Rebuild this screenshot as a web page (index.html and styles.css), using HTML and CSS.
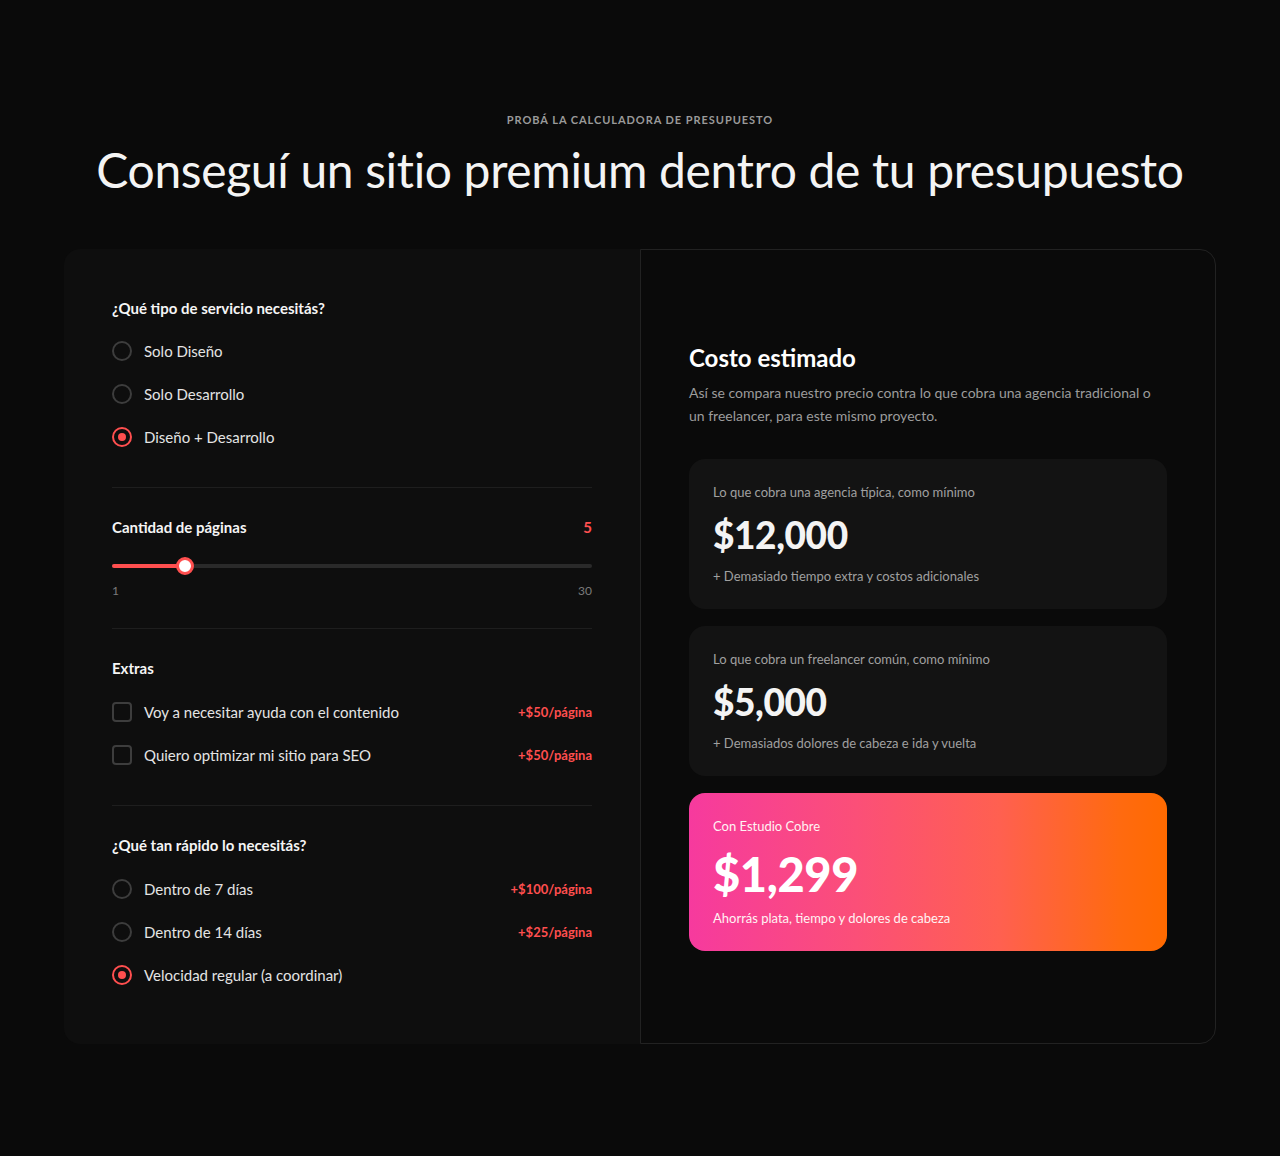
FILE: index.html
```html
<!DOCTYPE html>
<html lang="es">
<head>
<meta charset="utf-8">
<title>Calculadora de presupuesto</title>
<link rel="stylesheet" href="styles.css">
</head>
<body>
<main class="page">
  <header class="intro">
    <p class="eyebrow">PROBÁ LA CALCULADORA DE PRESUPUESTO</p>
    <h1 class="title">Conseguí un sitio premium dentro de tu presupuesto</h1>
  </header>

  <div class="calc">
    <div class="form">
      <section class="block block-first">
        <h3 class="block-title">¿Qué tipo de servicio necesitás?</h3>
        <div class="options">
          <div class="opt"><span class="radio"></span><span class="opt-label">Solo Diseño</span></div>
          <div class="opt"><span class="radio"></span><span class="opt-label">Solo Desarrollo</span></div>
          <div class="opt"><span class="radio on"></span><span class="opt-label">Diseño + Desarrollo</span></div>
        </div>
      </section>

      <section class="block block-slider">
        <div class="block-head">
          <h3 class="block-title">Cantidad de páginas</h3>
          <span class="count">5</span>
        </div>
        <div class="slider">
          <div class="track"><div class="fill" style="width:73px"></div></div>
          <span class="thumb" style="left:64px"></span>
        </div>
        <div class="range-labels"><span>1</span><span>30</span></div>
      </section>

      <section class="block">
        <h3 class="block-title">Extras</h3>
        <div class="options">
          <div class="opt"><span class="check"></span><span class="opt-label">Voy a necesitar ayuda con el contenido</span><span class="price">+$50/página</span></div>
          <div class="opt"><span class="check"></span><span class="opt-label">Quiero optimizar mi sitio para SEO</span><span class="price">+$50/página</span></div>
        </div>
      </section>

      <section class="block block-last">
        <h3 class="block-title">¿Qué tan rápido lo necesitás?</h3>
        <div class="options">
          <div class="opt"><span class="radio"></span><span class="opt-label">Dentro de 7 días</span><span class="price">+$100/página</span></div>
          <div class="opt"><span class="radio"></span><span class="opt-label">Dentro de 14 días</span><span class="price">+$25/página</span></div>
          <div class="opt"><span class="radio on"></span><span class="opt-label">Velocidad regular (a coordinar)</span></div>
        </div>
      </section>
    </div>

    <div class="result">
      <h2 class="result-title">Costo estimado</h2>
      <p class="result-sub">Así se compara nuestro precio contra lo que cobra una agencia tradicional o un freelancer, para este mismo proyecto.</p>
      <div class="cards">
        <div class="card">
          <p class="card-label">Lo que cobra una agencia típica, como mínimo</p>
          <p class="card-price">$12,000</p>
          <p class="card-note">+ Demasiado tiempo extra y costos adicionales</p>
        </div>
        <div class="card">
          <p class="card-label">Lo que cobra un freelancer común, como mínimo</p>
          <p class="card-price">$5,000</p>
          <p class="card-note">+ Demasiados dolores de cabeza e ida y vuelta</p>
        </div>
        <div class="card card-hot">
          <p class="card-label">Con Estudio Cobre</p>
          <p class="card-price big">$1,299</p>
          <p class="card-note">Ahorrás plata, tiempo y dolores de cabeza</p>
        </div>
      </div>
    </div>
  </div>
</main>
</body>
</html>
```
FILE: styles.css
```css
* { box-sizing: border-box; }
html, body { margin: 0; padding: 0; }
body {
  background: #0a0a0a;
  color: #f2f2f2;
  font-family: "Lato", "Open Sans", sans-serif;
  min-height: 1156px;
}
p, h1, h2, h3 { margin: 0; }

.page {
  width: 1152px;
  margin: 0 auto;
  padding-top: 112px;
}
.intro { text-align: center; }
.eyebrow {
  font-size: 11px;
  line-height: 16px;
  letter-spacing: 0.95px;
  font-weight: 700;
  color: #9a9a9a;
}
.title {
  margin-top: 14px;
  font-size: 48px;
  line-height: 56px;
  font-weight: 400;
  color: #f4f4f4;
  letter-spacing: -0.35px;
}

.calc {
  margin-top: 51px;
  display: grid;
  grid-template-columns: 576px 576px;
}

/* left form */
.form {
  background: #0e0e0e;
  border-radius: 16px 0 0 16px;
  padding: 48px 48px 48px;
}
.block {
  padding: 28px 0 34px;
  border-top: 1px solid #1e1e1e;
}
.block-first { border-top: none; padding-top: 0; }
.block-slider { padding-bottom: 29px; }
.block-last { padding-bottom: 5px; }
.block-title {
  font-size: 15px;
  line-height: 22px;
  font-weight: 700;
  color: #f5f5f5;
}
.block-head {
  display: flex;
  justify-content: space-between;
  align-items: center;
}
.count {
  color: #ff4f4f;
  font-size: 15px;
  font-weight: 700;
  line-height: 22px;
}
.options {
  margin-top: 17px;
  display: flex;
  flex-direction: column;
  gap: 11px;
}
.block-first .options { margin-top: 16px; }
.opt {
  height: 32px;
  display: flex;
  align-items: center;
}
.opt-label {
  margin-left: 12px;
  font-size: 15px;
  color: #e4e4e4;
  flex: 1;
}
.price {
  font-size: 13px;
  font-weight: 700;
  color: #ff4f4f;
}
.radio {
  width: 20px;
  height: 20px;
  border-radius: 50%;
  border: 2px solid #3d3d3d;
  flex: none;
  display: flex;
  align-items: center;
  justify-content: center;
}
.radio.on { border-color: #ff4f4f; }
.radio.on::after {
  content: "";
  width: 8px;
  height: 8px;
  border-radius: 50%;
  background: #ff4f4f;
}
.check {
  width: 20px;
  height: 20px;
  border-radius: 4px;
  border: 2px solid #3d3d3d;
  flex: none;
}

.slider {
  position: relative;
  height: 18px;
  margin-top: 19px;
  display: flex;
  align-items: center;
}
.track {
  width: 100%;
  height: 4px;
  border-radius: 2px;
  background: #2a2a2a;
}
.fill {
  height: 4px;
  border-radius: 2px;
  background: #ff4f4f;
}
.thumb {
  position: absolute;
  top: 0;
  width: 18px;
  height: 18px;
  border-radius: 50%;
  background: #ffffff;
  border: 3px solid #ff4f4f;
}
.range-labels {
  margin-top: 8px;
  display: flex;
  justify-content: space-between;
  font-size: 12px;
  line-height: 16px;
  color: #7a7a7a;
}

/* right result */
.result {
  border: 1px solid #222222;
  border-radius: 0 16px 16px 0;
  padding: 48px;
  display: flex;
  flex-direction: column;
  justify-content: center;
}
.result-title {
  font-size: 24px;
  line-height: 30px;
  font-weight: 700;
  color: #ffffff;
}
.result-sub {
  margin-top: 8px;
  font-size: 14px;
  line-height: 23px;
  color: #9c9c9c;
}
.cards {
  margin-top: 32px;
  display: flex;
  flex-direction: column;
  gap: 17px;
}
.card {
  background: #131313;
  border-radius: 16px;
  padding: 24px;
}
.card-label {
  font-size: 13px;
  line-height: 18px;
  color: #a0a0a0;
}
.card-price {
  margin-top: 12px;
  font-size: 37px;
  line-height: 44px;
  font-weight: 900;
  color: #f4f4f4;
  letter-spacing: -0.4px;
}
.card-note {
  margin-top: 10px;
  font-size: 13px;
  line-height: 18px;
  color: #a0a0a0;
}
.card-hot {
  background: linear-gradient(90deg, #f63a9e 0%, #fb4f78 35%, #ff6050 65%, #ff6a10 90%, #ff6a00 100%);
}
.card-hot .card-label,
.card-hot .card-note { color: #fff3f3; }
.card-price.big {
  margin-top: 11px;
  font-size: 47px;
  line-height: 56px;
  color: #ffffff;
}
.card-hot .card-note { margin-top: 7px; }
```
